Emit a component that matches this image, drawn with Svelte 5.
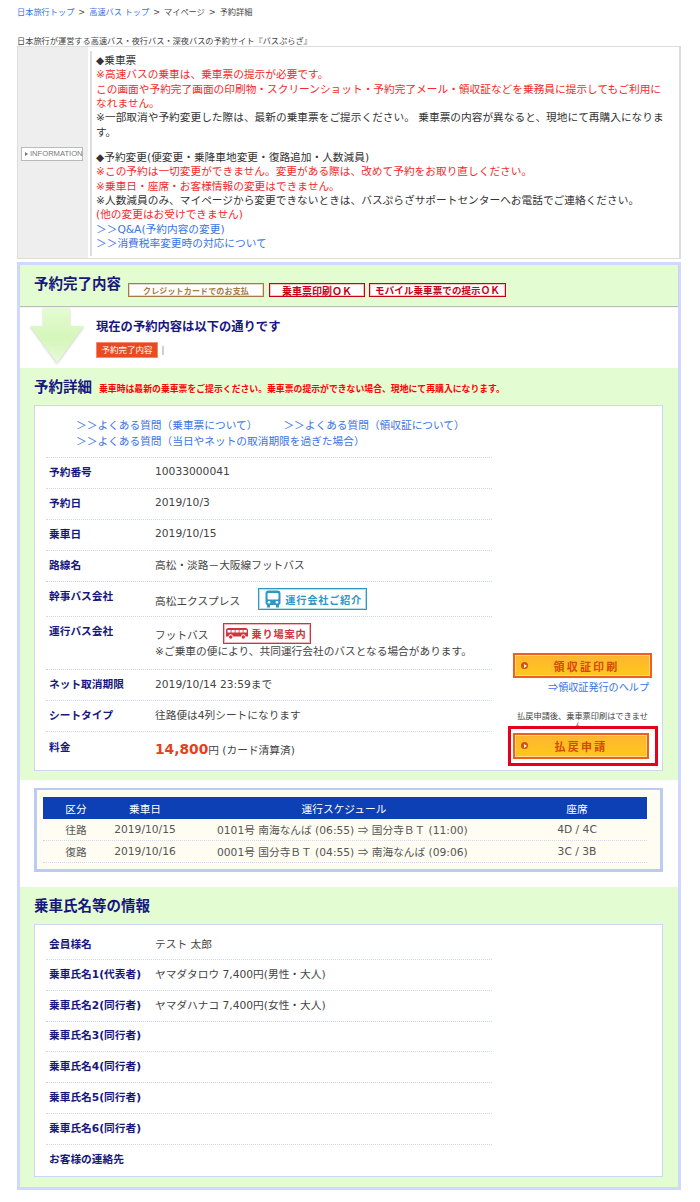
<script>
  const details = [
    { label: '予約番号', value: '10033000041' },
    { label: '予約日', value: '2019/10/3' },
    { label: '乗車日', value: '2019/10/15' },
    { label: '路線名', value: '高松・淡路－大阪線フットバス' }
  ];
  const schedule = [
    { kind: '往路', date: '2019/10/15', no: '0101号', from: '南海なんば (06:55)', to: '国分寺ＢＴ (11:00)', seat: '4D / 4C' },
    { kind: '復路', date: '2019/10/16', no: '0001号', from: '国分寺ＢＴ (04:55)', to: '南海なんば (09:06)', seat: '3C / 3B' }
  ];
  const passengers = [
    { label: '会員様名', value: 'テスト 太郎' },
    { label: '乗車氏名1(代表者)', value: 'ヤマダタロウ 7,400円(男性・大人)' },
    { label: '乗車氏名2(同行者)', value: 'ヤマダハナコ 7,400円(女性・大人)' },
    { label: '乗車氏名3(同行者)', value: '' },
    { label: '乗車氏名4(同行者)', value: '' },
    { label: '乗車氏名5(同行者)', value: '' },
    { label: '乗車氏名6(同行者)', value: '' },
    { label: 'お客様の連絡先', value: '' }
  ];
</script>

<div class="page">
  <nav class="crumbs">
    <a href="#top">日本旅行トップ</a><span>&gt;</span><a href="#bus">高速バス トップ</a><span>&gt;</span>マイページ<span>&gt;</span>予約詳細
  </nav>
  <p class="lead">日本旅行が運営する高速バス・夜行バス・深夜バスの予約サイト『バスぷらざ』</p>

  <div class="info">
    <div class="info-side"><span class="info-badge"><i></i>INFORMATION</span></div>
    <div class="info-body">
      <div>
        ◆乗車票<br />
        <span class="red">※高速バスの乗車は、乗車票の提示が必要です。<br />
        この画面や予約完了画面の印刷物・スクリーンショット・予約完了メール・領収証などを乗務員に提示してもご利用になれません。</span><br />
        ※一部取消や予約変更した際は、最新の乗車票をご提示ください。 乗車票の内容が異なると、現地にて再購入になります。
      </div>
      <div class="info-gap">
        ◆予約変更(便変更・乗降車地変更・復路追加・人数減員)<br />
        <span class="red">※この予約は一切変更ができません。変更がある際は、改めて予約をお取り直しください。<br />
        ※乗車日・座席・お客様情報の変更はできません。</span><br />
        ※人数減員のみ、マイページから変更できないときは、バスぷらざサポートセンターへお電話でご連絡ください。<br />
        <span class="red">(他の変更はお受けできません)</span><br />
        <a href="#qa">＞＞Q&amp;A(予約内容の変更)</a><br />
        <a href="#tax">＞＞消費税率変更時の対応について</a>
      </div>
    </div>
  </div>

  <main class="main">
    <header class="done-head">
      <h2>予約完了内容</h2>
      <span class="tag tag-brown">クレジットカードでのお支払</span>
      <span class="tag tag-red wide">乗車票印刷ＯＫ</span>
      <span class="tag tag-red mobile">モバイル乗車票での提示ＯＫ</span>
    </header>

    <section class="status">
      <svg class="arrow" width="56" height="56" viewBox="0 0 56 56" aria-hidden="true">
        <defs>
          <linearGradient id="arrowFill" x1="0" y1="0" x2="0" y2="1">
            <stop offset="0" stop-color="#e4fcd2" />
            <stop offset="0.55" stop-color="#d6f6bb" />
            <stop offset="1" stop-color="#e6fbd8" />
          </linearGradient>
        </defs>
        <path d="M13 0H40V18H54L27 55L0 18H13Z" fill="url(#arrowFill)" />
      </svg>
      <strong>現在の予約内容は以下の通りです</strong>
      <div class="status-line"><span class="pill">予約完了内容</span><i></i></div>
    </section>

    <section class="green details">
      <div class="detail-head">
        <h2>予約詳細</h2>
        <span>乗車時は最新の乗車票をご提示ください。乗車票の提示ができない場合、現地にて再購入になります。</span>
      </div>

      <div class="card">
        <div class="faq">
          <div class="faq-line"><a href="#q1">＞＞よくある質問（乗車票について）</a><a href="#q2">＞＞よくある質問（領収証について）</a></div>
          <div class="faq-line"><a href="#q3">＞＞よくある質問（当日やネットの取消期限を過ぎた場合）</a></div>
        </div>

        <div class="card-cols">
          <div class="rows">
            {#each details as row}
              <div class="row"><b>{row.label}</b><span>{row.value}</span></div>
            {/each}
            <div class="row row-company">
              <b>幹事バス会社</b>
              <span class="inline"><span class="low">高松エクスプレス</span>
                <span class="guide guide-blue">
                  <svg width="18" height="18" viewBox="0 0 18 18" aria-hidden="true">
                    <path fill="#2f97c6" d="M4.500 0.500h9A3 3 0 0 1 16.500 3.500V13a2 2 0 0 1-1.500 1.900V17.500h-3V15H6v2.500H3v-2.600A2 2 0 0 1 1.500 13V3.500a3 3 0 0 1 3-3Z" />
                    <rect x="3.500" y="3" width="11" height="6.500" rx="1" fill="#fff" />
                    <circle cx="5" cy="12.200" r="1.300" fill="#fff" />
                    <circle cx="13" cy="12.200" r="1.300" fill="#fff" />
                  </svg>
                  運行会社ご紹介
                </span>
              </span>
            </div>
            <div class="row row-operator">
              <b>運行バス会社</b>
              <span>
                <span class="inline"><span class="low">フットバス</span>
                  <span class="guide guide-red">
                    <svg width="22" height="11" viewBox="0 0 22 11" aria-hidden="true">
                      <path fill="#d0343c" d="M2.500 0h17A2.500 2.500 0 0 1 22 2.500V8.500H19.500a2.200 2.200 0 0 0-4.400 0H6.900a2.200 2.200 0 0 0-4.400 0H0V2.500A2.500 2.500 0 0 1 2.500 0Z" />
                      <path fill="#fff" d="M1.500 2h3.200v2.500H1.500ZM5.500 2h3.200v2.500H5.500ZM9.500 2h3.200v2.500H9.500ZM13.500 2h3.200v2.500H13.500ZM17.500 2h3.200v2.500H17.500Z" />
                      <circle cx="4.700" cy="9" r="1.700" fill="#d0343c" />
                      <circle cx="17.300" cy="9" r="1.700" fill="#d0343c" />
                    </svg>
                    乗り場案内
                  </span>
                </span>
                <span class="note">※ご乗車の便により、共同運行会社のバスとなる場合があります。</span>
              </span>
            </div>
            <div class="row"><b>ネット取消期限</b><span>2019/10/14 23:59まで</span></div>
            <div class="row"><b>シートタイプ</b><span>往路便は4列シートになります</span></div>
            <div class="row row-fare"><b>料金</b><span><em>14,800</em>円 (カード清算済)</span></div>
          </div>

          <aside class="actions">
            <button type="button" class="action">領収証印刷</button>
            <a class="help" href="#help"><span class="arrow-glyph">⇒</span>領収証発行のヘルプ</a>
            <p class="refund-note">払戻申請後、乗車票印刷はできません。</p>
            <div class="refund-box"><button type="button" class="action refund">払戻申請</button></div>
          </aside>
        </div>
      </div>
    </section>

    <section class="schedule">
      <div class="schedule-panel">
        <div class="sch-row sch-head"><span>区分</span><span>乗車日</span><span>運行スケジュール</span><span>座席</span></div>
        {#each schedule as item}
          <div class="sch-row">
            <span>{item.kind}</span>
            <span>{item.date}</span>
            <span class="plan">{item.no} {item.from} <span class="arrow-glyph">⇒</span> {item.to}</span>
            <span>{item.seat}</span>
          </div>
        {/each}
      </div>
    </section>

    <section class="green passengers">
      <h2>乗車氏名等の情報</h2>
      <div class="card">
        <div class="rows">
          {#each passengers as row}
            <div class="row"><b>{row.label}</b><span>{row.value}</span></div>
          {/each}
        </div>
      </div>
    </section>
  </main>
</div>

<style>
  :global(body) {
    margin: 0;
    background: #fff;
    color: #444;
    font-family: "DejaVu Sans", "Noto Sans CJK JP", sans-serif;
    font-size: 10.7px;
  }

  a {
    color: #3a74e6;
    text-decoration: none;
  }

  .page {
    width: 700px;
    height: 1202px;
    padding: 0 19px 0 17px;
    box-sizing: border-box;
    overflow: hidden;
  }

  /* 上部リンク */
  .crumbs {
    height: 26px;
    padding-top: 6px;
    box-sizing: border-box;
    font-size: 8.2px;
    line-height: 12px;
    white-space: nowrap;
  }
  .crumbs span {
    margin: 0 4px;
  }
  .lead {
    margin: 9px 0 0;
    padding-top: 1px;
    height: 10px;
    font-size: 8.2px;
    line-height: 10px;
    white-space: nowrap;
  }

  /* お知らせ */
  .info {
    display: flex;
    width: 664px;
    height: 213px;
    border: 1px solid #ddd;
    border-right-width: 2px;
    box-sizing: border-box;
  }
  .info-side {
    width: 70px;
    flex: none;
    background: #eee;
    display: flex;
    align-items: center;
    padding: 2px 0 0 3px;
    box-sizing: border-box;
  }
  .info-badge {
    width: 62px;
    height: 14px;
    box-sizing: border-box;
    border: 1px solid #bbb;
    background: #fff;
    display: flex;
    align-items: center;
    gap: 2px;
    padding-left: 3px;
    color: #777;
    font: 7.6px/1 "Liberation Sans", sans-serif;
    white-space: nowrap;
  }
  .info-badge i {
    border-left: 3px solid #777;
    border-top: 2.5px solid transparent;
    border-bottom: 2.5px solid transparent;
  }
  .info-body {
    margin: 4px 0 2px 2px;
    padding: 3px 0 0 4px;
    border-left: 2px solid #ddd;
    width: 569px;
    color: #333;
    font-size: 10.7px;
    line-height: 14.35px;
  }
  .info-gap {
    margin-top: 11px;
  }
  .red {
    color: #f42a2a;
  }

  /* 予約内容 */
  .main {
    width: 664px;
    margin-top: 3px;
    border: 3px solid #cfd8ff;
    box-sizing: border-box;
    height: 928px;
  }
  h2 {
    margin: 0;
    color: #17177d;
    font-size: 14.5px;
    line-height: 20px;
    font-weight: 700;
  }
  .done-head {
    height: 41px;
    background: #e4fcd2;
    display: flex;
    align-items: flex-start;
    padding: 9px 0 0 14px;
    box-sizing: border-box;
    box-shadow: 0 1px 1px #bbb;
    position: relative;
  }
  .tag {
    height: 14px;
    box-sizing: border-box;
    background: #fff;
    margin-top: 9px;
    display: flex;
    align-items: center;
    justify-content: center;
    font-weight: 700;
    white-space: nowrap;
  }
  .tag-brown {
    width: 136px;
    margin-left: 7px;
    border: 1px solid #a47a45;
    color: #a47a45;
    font-size: 8px;
    letter-spacing: 0.15px;
    box-shadow: inset 0 0 0 1px #e6d8c4;
  }
  .tag-red {
    border: 1px solid #c60014;
    color: #c60014;
    font-size: 10px;
    box-shadow: inset 0 0 0 1px #f2c4c8;
  }
  .tag.wide {
    width: 96px;
    margin-left: 5px;
  }
  .tag.mobile {
    width: 137px;
    margin-left: 4px;
    font-size: 9.5px;
    letter-spacing: 0.1px;
  }

  .status {
    position: relative;
    height: 60px;
    margin-top: 2px;
    padding: 11px 0 0 76px;
    box-sizing: border-box;
    background: #fff;
  }
  .status strong {
    display: block;
    color: #17177d;
    font-size: 12.3px;
    line-height: 16px;
  }
  .status-line {
    display: flex;
    align-items: center;
    gap: 4px;
    margin-top: 7px;
  }
  .pill {
    width: 62px;
    height: 16px;
    background: #ea4a22;
    box-shadow: inset 0 0 0 1px #f08a6c;
    color: #fff;
    font-size: 8.5px;
    line-height: 16px;
    text-align: center;
  }
  .status-line i {
    width: 2px;
    height: 9px;
    background: #c8cfe0;
  }
  .arrow {
    position: absolute;
    left: 10px;
    top: 0;
    filter: drop-shadow(0 1px 1px #ccc);
  }

  .green {
    background: #e4fcd2;
  }
  .details {
    height: 412px;
    padding: 0 14px;
  }
  .detail-head {
    height: 37px;
    padding-top: 9px;
    box-sizing: border-box;
    display: flex;
    align-items: flex-start;
    gap: 7px;
  }
  .detail-head span {
    color: #f00;
    font-size: 8.85px;
    font-weight: 700;
    line-height: 24px;
    white-space: nowrap;
  }
  .card {
    width: 629px;
    background: #fff;
    border: 1px solid #cdd6f5;
    box-sizing: border-box;
    padding: 0 0 0 11px;
  }
  .details .card {
    height: 366px;
  }
  .faq {
    height: 51px;
    padding: 12px 0 0 30px;
    box-sizing: border-box;
    line-height: 16px;
  }
  .faq-line {
    display: flex;
    gap: 26px;
    font-size: 10.7px;
  }
  .card-cols {
    display: flex;
  }
  .rows {
    width: 446px;
    flex: none;
  }
  .row {
    display: grid;
    grid-template-columns: 106px 1fr;
    min-height: 31px;
    padding: 0 0 3px 3px;
    border-top: 1px dotted #cdd6f6;
    box-sizing: border-box;
    align-items: center;
    color: #444;
    font-size: 10.7px;
  }
  .row b {
    color: #17177d;
    font-size: 10.7px;
  }
  .row-company {
    height: 35px;
    align-items: start;
  }
  .row-company b,
  .row-operator b {
    padding-top: 6px;
  }
  .row-company > span {
    padding-top: 6px;
  }
  .row-operator {
    height: 53px;
    align-items: start;
  }
  .row-operator > span {
    padding-top: 6px;
  }
  .row-fare {
    height: 37px;
    padding-bottom: 0;
  }
  .row-fare b {
    margin-bottom: 8px;
  }
  .row-fare span {
    margin-bottom: 2px;
    color: #444;
  }
  .row-fare em {
    color: #e8401c;
    font-style: normal;
    font-weight: 700;
    font-size: 13.8px;
  }
  .inline {
    display: flex;
    align-items: center;
    white-space: nowrap;
  }
  .low {
    margin-top: 2px;
  }
  .note {
    display: block;
    white-space: nowrap;
    line-height: 16px;
  }
  .guide {
    display: inline-flex;
    align-items: center;
    gap: 3px;
    box-sizing: border-box;
    background: #fff;
    font-weight: 700;
    font-size: 10.2px;
    letter-spacing: 0.8px;
  }
  .guide-blue {
    width: 109px;
    height: 22px;
    margin-left: 18px;
    padding-left: 5px;
    border: 1px solid #2f97c6;
    color: #2f97c6;
    box-shadow: inset 0 0 0 1px #b6dcec;
  }
  .guide-red {
    width: 88px;
    height: 21px;
    margin-left: 15px;
    padding-left: 2px;
    border: 1px solid #d0343c;
    color: #d0343c;
    box-shadow: inset 0 0 0 1px #eeb8bb;
  }
  .arrow-glyph {
    font-family: "Noto Sans CJK JP", sans-serif;
  }

  .actions {
    flex: 1;
    padding: 196px 0 0 21px;
    box-sizing: border-box;
  }
  .action {
    display: block;
    position: relative;
    width: 139px;
    height: 25px;
    padding: 0 0 0 8px;
    border: 2px solid #f0601a;
    box-sizing: border-box;
    background: linear-gradient(#ffb530, #ffc81c);
    box-shadow: inset 0 0 0 1px #ffd98a;
    color: #d64a08;
    font-family: "Noto Sans CJK JP", sans-serif;
    font-weight: 700;
    font-size: 11px;
    letter-spacing: 2.2px;
  }
  .action::before {
    content: "";
    position: absolute;
    left: 6px;
    top: 7px;
    width: 7px;
    height: 7px;
    border-radius: 50%;
    background: #d8500c;
  }
  .action::after {
    content: "";
    position: absolute;
    left: 8.5px;
    top: 8.5px;
    border-left: 3px solid #fff;
    border-top: 2px solid transparent;
    border-bottom: 2px solid transparent;
  }
  .help {
    display: block;
    width: 136px;
    margin-top: 2px;
    text-align: right;
    font-size: 10.1px;
    line-height: 14px;
    white-space: nowrap;
  }
  .refund-note {
    width: 133px;
    margin: 16px 0 0 3px;
    height: 15px;
    overflow: visible;
    font-size: 8.2px;
    line-height: 10px;
    text-align: center;
  }
  .refund-box {
    position: relative;
    width: 150px;
    height: 40px;
    margin: 0 0 0 -5px;
    padding: 4px 0 0 2px;
    border: 3px solid #e6001e;
    box-sizing: border-box;
    background: #fff;
  }
  .refund {
    width: 136px;
    height: 26px;
    padding: 0;
  }

  /* スケジュール */
  .schedule {
    height: 107px;
    padding: 8px 0 0 14px;
    box-sizing: border-box;
    background: #fff;
  }
  .schedule-panel {
    width: 629px;
    height: 84px;
    padding: 7px 13px 0 6px;
    box-sizing: border-box;
    border: 3px solid #bccbf2;
    border-width: 2px 3px 3px;
    background: #fffdf2;
  }
  .sch-row {
    display: grid;
    grid-template-columns: 66px 72px 326px 140px;
    height: 22px;
    align-items: center;
    border-bottom: 1px dotted #cdd6f6;
    font-size: 10.7px;
    color: #555;
    box-sizing: border-box;
    text-align: center;
  }
  .sch-row span {
    white-space: nowrap;
  }
  .sch-row .plan {
    padding-left: 36px;
    text-align: left;
  }
  .sch-head {
    background: #0d3fb5;
    color: #fff;
    border-bottom: 0;
  }

  .passengers {
    height: 300px;
    padding: 9px 14px 0;
    box-sizing: border-box;
  }
  .passengers h2 {
    height: 28px;
  }
  .passengers .card {
    height: 253px;
  }
  .passengers .row {
    min-height: 30.8px;
  }
  .passengers .row:first-child {
    min-height: 34px;
    padding: 2px 0 0 3px;
    border-top: 0;
  }
</style>
